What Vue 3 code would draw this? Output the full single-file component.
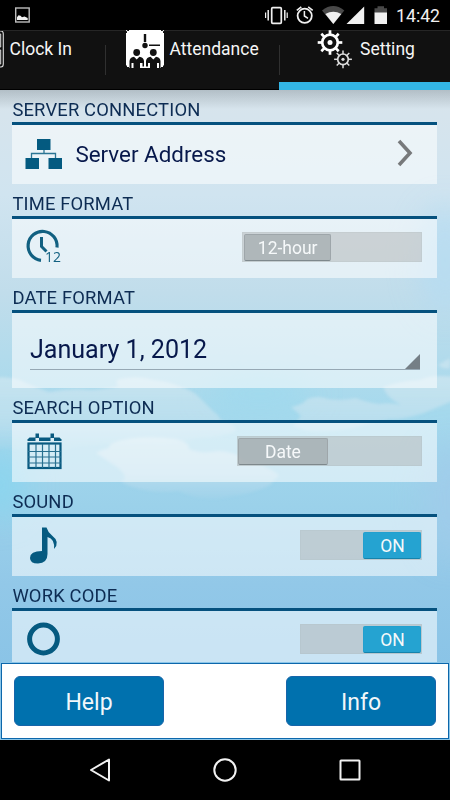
<script setup>
import { ref } from 'vue'

const sections = ref([
  { id: 'server', title: 'SERVER CONNECTION' },
  { id: 'time', title: 'TIME FORMAT', toggle: '12-hour' },
  { id: 'date', title: 'DATE FORMAT' },
  { id: 'search', title: 'SEARCH OPTION', toggle: 'Date' },
  { id: 'sound', title: 'SOUND', toggle: 'ON', on: true },
  { id: 'work', title: 'WORK CODE', toggle: 'ON', on: true },
])
const gearAngles = [0, 45, 90, 135, 180, 225, 270, 315]
</script>

<template>
  <div class="screen">
    <header class="status">
      <svg class="picture" width="16" height="16" viewBox="0 0 16 16">
        <rect x=".7" y="1" width="13.5" height="14" fill="none" stroke="#bdbdbd" stroke-width="1.4" />
        <path d="M2 13V10.3L3.500 8.300L5.500 8.800L7 10.300L9.500 9.500L12.700 11V13Z" fill="#f2f2f2" />
      </svg>
      <svg class="sysicons" width="130" height="30" viewBox="260 0 130 30">
        <g fill="none" stroke="#f0f0f0">
          <rect x="271.7" y="7.7" width="9.6" height="15.6" rx="1" stroke-width="1.7" />
          <path d="M268.2 10V20.500M284.800 10V20.500" stroke-width="1.500" />
          <path d="M265.600 12.500V18M287.200 12.500V18" stroke-width="1.200" />
          <circle cx="304.700" cy="15.800" r="7.100" stroke-width="1.800" />
          <path d="M304.400 11V16L308 18.300" stroke-width="1.500" />
          <path d="M296.800 10.300L301.300 6.800M308.200 6.800L312.700 10.300" stroke-width="1.600" />
        </g>
        <path d="M322 10.500Q333.300 1.700 344.300 10.500L333.300 24Z" fill="#494949" />
        <path d="M325.300 14Q333.300 9.500 341.300 14L333.300 24Z" fill="#f0f0f0" />
        <path d="M346.500 24H364.200V6.500Z" fill="#f0f0f0" />
        <path d="M374.500 8.200H377.500V6.200H384V8.200H387V13H374.500Z" fill="#494949" />
        <rect x="374.500" y="12.500" width="12.500" height="11.500" fill="#f0f0f0" />
      </svg>
      <span class="clock">14:42</span>
    </header>

    <nav class="tabs">
      <div class="tab tab-clock">
        <svg width="5" height="40" viewBox="0 0 5 40" fill="none" stroke="#ddd">
          <path d="M-2 0H1Q3.300 0 3.300 3V33Q3.300 36 1 36H-2" stroke-width="1.100" />
          <path d="M-2 3H.7V16H-2M-2 19H.7V33H-2" stroke-width="1" />
        </svg>
        <span>Clock In</span>
      </div>
      <div class="tab tab-attendance">
        <svg width="38" height="38" viewBox="0 0 38 38">
          <rect width="38" height="38" fill="#fff" />
          <g fill="#111">
            <path d="M0 1.500L1.500 0H3V1H1V3H0ZM38 1.500L36.500 0H35V1H37V3H38ZM0 35.500H1V37H3V38H0ZM38 35.500H37V37H35V38H38Z" />
            <circle cx="19" cy="15.500" r="2.700" />
            <path d="M17.800 4H20.200V12H17.800ZM23 14.500H34V16H23Z" />
            <circle cx="10.700" cy="22.500" r="3.400" />
            <circle cx="27.300" cy="22.500" r="3.400" />
            <path d="M3.500 38V31Q4 27.300 8 26.800L10.700 29.500L13.400 26.800Q17.500 27.300 18 31V38ZM20 38V31Q20.500 27.300 24.600 26.800L27.300 29.500L30 26.800Q34 27.300 34.500 31V38Z" />
          </g>
          <path d="M5.500 38V33H7.500V38ZM14 38V33H16.500V36.500H22V33H24V38ZM31 38V33H33V38Z" fill="#fff" />
        </svg>
        <span>Attendance</span>
      </div>
      <div class="tab tab-setting">
        <svg width="37" height="39" viewBox="0 0 37 39" fill="none" stroke="#fff">
          <g transform="translate(13 12.500)">
            <circle r="7.800" stroke-width="2.700" />
            <circle r="2.500" fill="#fff" stroke="none" />
            <path v-for="a in gearAngles" :key="a" d="M0 -8V-12.300" stroke-width="2.700" :transform="`rotate(${a})`" />
          </g>
          <g transform="translate(26 29.300)" stroke="#ddd">
            <circle r="5.300" stroke-width="1.700" />
            <circle r="1.600" fill="#ddd" stroke="none" />
            <path v-for="a in gearAngles" :key="a" d="M0 -5V-8.900" stroke-width="1.500" :transform="`rotate(${a})`" />
          </g>
        </svg>
        <span>Setting</span>
      </div>
    </nav>

    <main class="content">
      <svg class="sky" width="450" height="650" viewBox="0 90 450 650">
        <defs>
          <linearGradient id="air" x1="0" y1="0" x2="0" y2="1">
            <stop offset="0" stop-color="#d8e4ec" />
            <stop offset=".16" stop-color="#d0e4f0" />
            <stop offset=".31" stop-color="#c1ddeb" />
            <stop offset=".41" stop-color="#b2dbec" />
            <stop offset=".5" stop-color="#a5d9ed" />
            <stop offset=".64" stop-color="#9bd1ea" />
            <stop offset=".76" stop-color="#92c8e8" />
            <stop offset="1" stop-color="#83c0e5" />
          </linearGradient>
          <linearGradient id="shade" x1="0" y1="0" x2="0" y2="1">
            <stop offset="0" stop-color="#75828a" stop-opacity=".38" />
            <stop offset="1" stop-color="#75828a" stop-opacity="0" />
          </linearGradient>
          <linearGradient id="cloud" gradientUnits="userSpaceOnUse" x1="0" y1="375" x2="0" y2="452">
            <stop offset="0" stop-color="#d4e8f1" />
            <stop offset=".6" stop-color="#c8e3ef" stop-opacity=".9" />
            <stop offset="1" stop-color="#c0dfee" stop-opacity=".1" />
          </linearGradient>
          <linearGradient id="cloud-low" gradientUnits="userSpaceOnUse" x1="0" y1="438" x2="0" y2="505">
            <stop offset="0" stop-color="#d4e8f1" />
            <stop offset=".55" stop-color="#c4e0ee" />
            <stop offset="1" stop-color="#aed6ec" stop-opacity=".1" />
          </linearGradient>
          <filter id="soft" x="-20%" y="-20%" width="140%" height="140%"><feGaussianBlur stdDeviation="1.5" /></filter>
          <filter id="haze" x="-50%" y="-50%" width="200%" height="200%"><feGaussianBlur stdDeviation="14" /></filter>
        </defs>
        <rect y="90" width="450" height="650" fill="url(#air)" />
        <g filter="url(#haze)">
          <ellipse cx="445" cy="260" rx="28" ry="55" fill="#b4dcf2" opacity=".7" />
          <ellipse cx="260" cy="394" rx="55" ry="14" fill="#9adaee" opacity=".7" />
          <ellipse cx="0" cy="485" rx="28" ry="35" fill="#86d6f0" opacity=".7" />
          <ellipse cx="450" cy="500" rx="28" ry="60" fill="#a0cbe9" opacity=".7" />
        </g>
        <g filter="url(#soft)">
          <path fill="url(#cloud)" d="M-5 378Q5 376 20 380Q32 386 49 392Q70 388 90 390Q107 389 119 386Q111 379 127 378Q140 376 154 380Q166 381 176 385Q192 390 199 397Q207 405 213 411Q221 417 220 420Q236 424 236 431Q223 438 198 438Q170 445 150 442Q95 444 75 447Q60 455 34 451L-5 448Z" opacity=".65" />
          <path fill="url(#cloud-low)" d="M96 453Q102 449 109 448Q108 443 123 440Q145 435 175 439Q190 442 189 449Q200 454 218 451Q238 452 243 460Q265 464 279 475L270 485Q255 493 228 497Q203 502 178 491Q145 495 121 482Q132 476 111 463Z" opacity=".65" />
          <path fill="url(#cloud)" d="M291 407Q303 405 307 399Q318 395 328 399Q342 401 356 398Q366 402 379 404Q389 402 401 405Q386 397 383 387Q400 381 420 380Q432 374 455 377V400Q438 407 424 413Q402 420 390 419L363 425Q342 433 307 431L293 426L301 416Z" opacity=".65" />
          <path d="M438 365L450 358V368Q444 370 438 365Z" fill="#d0e6f1" opacity=".65" />
        </g>
        <rect y="90" width="450" height="19" fill="url(#shade)" />
      </svg>

      <section v-for="s in sections" :key="s.id" class="section" :class="s.id">
        <h2>{{ s.title }}</h2>
        <div class="card">
          <template v-if="s.id === 'server'">
            <svg class="icon-net" width="38" height="32" viewBox="0 0 38 32">
              <path d="M19 12V15.500M6.500 20V15.500H30.500V20" fill="none" stroke="#2b7594" stroke-width="1.300" />
              <path d="M12 1H25.500V12H12ZM.5 20H14V31H.5ZM23.500 20H37V31H23.500Z" fill="#045a80" />
            </svg>
            <span class="row-label">Server Address</span>
            <svg class="chevron" width="16" height="28" viewBox="0 0 16 28"><path d="M2 2L13 14L2 26" fill="none" stroke="#77797b" stroke-width="3.600" /></svg>
          </template>

          <div v-else-if="s.id === 'date'" class="spinner">
            <span>January 1, 2012</span>
            <svg width="15" height="15" viewBox="0 0 15 15"><path d="M0 15L15 0V15Z" fill="#757f86" /></svg>
          </div>

          <template v-else>
            <svg class="icon" width="40" height="40" viewBox="0 0 40 40">
              <template v-if="s.id === 'time'">
                <path d="M32 19.500A14.500 14.500 0 1 0 16 32.300" fill="none" stroke="#116081" stroke-width="3.200" />
                <path d="M16.500 9V18.500L21.500 23.500" fill="none" stroke="#116081" stroke-width="3" />
                <text x="20" y="34" class="icon-text">12</text>
              </template>
              <template v-else-if="s.id === 'search'">
                <path d="M10.500 1.500H14V6H10.500ZM25.500 1.500H29V6H25.500Z" fill="#085a80" />
                <path d="M2.500 9V7.500L4.500 5.500H34.500L36.500 7.500V9Z" fill="#085a80" />
                <path d="M10.500 6H14V9.500H10.500ZM25.500 6H29V9.500H25.500Z" fill="#dceef5" />
                <rect x="3.500" y="11.500" width="32" height="24.500" fill="none" stroke="#085a80" stroke-width="2.200" />
                <path d="M11 12V36M17.500 12V36M24 12V36M30.500 12V36M3 19.500H36M3 25H36M3 31H36" stroke="#276f8f" stroke-width="1.200" />
              </template>
              <template v-else-if="s.id === 'sound'">
                <path d="M17 1.500H21.500Q23 6.500 27 9.500Q35.500 16 29 23Q30 13 22.500 11V28Q22.500 37 13 37.500Q5 37.500 5 32Q5 25 17 25Z" fill="#055a80" />
              </template>
              <circle v-else cx="18.500" cy="19" r="13.900" fill="none" stroke="#055a80" stroke-width="5" />
            </svg>
            <div class="switch" :class="{ on: s.on }"><span class="thumb">{{ s.toggle }}</span></div>
          </template>
        </div>
      </section>
    </main>

    <footer class="actions">
      <div class="panel">
        <button>Help</button>
        <button>Info</button>
      </div>
    </footer>

    <div class="navbar">
      <svg width="26" height="26" viewBox="0 0 26 26"><path d="M4 13L22 2.500V23.500Z" /></svg>
      <svg width="26" height="26" viewBox="0 0 26 26"><circle cx="13" cy="13" r="10.700" /></svg>
      <svg width="26" height="26" viewBox="0 0 26 26"><rect x="3.500" y="3.500" width="19" height="19" rx=".5" /></svg>
    </div>
  </div>
</template>

<style>
body { margin: 0; background: #000; }
</style>

<style scoped>
.screen { width: 450px; height: 800px; overflow: hidden; display: flex; flex-direction: column; background: #000; font-family: Roboto, "Liberation Sans", sans-serif; }
svg { display: block; flex: none; }
.status { height: 30px; flex: none; display: flex; align-items: center; }
.picture { margin-left: 15px; }
.sysicons { margin-left: 229px; }
.clock { color: #f0f0f0; font-size: 17.700px; margin-left: 6px; line-height: 30px; padding-top: 1px; }
.tabs { height: 60px; box-sizing: border-box; flex: none; display: flex; background: #111; border-top: 1px solid #262626; }
.tab { display: flex; color: #f6f6f6; font-size: 17.500px; line-height: 37px; box-sizing: border-box; border-bottom: 1px solid #000; background: linear-gradient(#303030, #303030) right 14px / 1px 30px no-repeat; }
.tab-clock { width: 106px; }
.tab-clock span { margin-left: 4.500px; }
.tab-attendance { width: 173px; padding-left: 20px; background-image: none; }
.tab-attendance svg { margin-top: -1px; }
.tab-attendance span { margin-left: 5.500px; }
.tab-setting { width: 171px; padding-left: 38px; border-bottom: 8px solid #33b5e5; background: linear-gradient(#303030, #303030) left 14px / 1px 30px no-repeat; }
.tab-setting span { margin-left: 6px; }
.tab-setting svg { margin-top: -1px; }
.content { position: relative; height: 572px; flex: none; overflow: hidden; }
.sky { position: absolute; left: 0; top: 0; }
.section { position: relative; padding: 0 12.600px 0 12.400px; height: 94px; display: flex; flex-direction: column; }
.section.date { height: 110px; }
h2 { margin: 0; height: 31.500px; box-sizing: border-box; padding-top: 7px; font-size: 18.400px; letter-spacing: .16px; line-height: 26px; font-weight: 400; color: #0d2c53; flex: none; }
.card { flex: 1; display: flex; align-items: center; border-top: 3px solid #05517e; background: rgba(255, 255, 255, .54); background-clip: padding-box; }
.icon-net { margin-left: 12.600px; }
.row-label { flex: 1; margin-left: 12.400px; font-size: 22.400px; color: #07184b; }
.chevron { margin-right: 24px; position: relative; top: -1px; }
.icon { margin-left: 12.500px; }
.icon-text { font-family: "Open Sans", sans-serif; font-size: 14px; fill: #116081; }
.switch { margin-left: auto; margin-right: 15px; box-sizing: border-box; height: 30px; width: 180.500px; padding: 2px 1px 2px 1px; position: relative; top: -1px; display: flex; background: rgba(166, 169, 169, .43); border: 1px solid rgba(160, 170, 175, .12); }
.search .switch { width: 185.500px; }
.thumb { box-sizing: border-box; width: 87.500px; height: 27px; margin-top: -1px; line-height: 26px; font-size: 17.500px; text-align: center; color: #f6f9fa; background: rgba(155, 163, 167, .58); border: 1px solid #9ea6aa; border-bottom-color: #7e888c; border-radius: 2px; }
.search .thumb { width: 90px; margin-left: -1px; }
.switch.on { width: 122.500px; justify-content: flex-end; padding-right: 0; }
.on .thumb { width: 58px; background: #25a3d1; border-color: #22a0cf; border-bottom-color: #1583ac; }
.spinner { position: relative; flex: 1; margin: 0 17px 0 17.500px; height: 39px; border-bottom: 1px solid #96a8b4; display: flex; align-items: flex-end; justify-content: space-between; font-size: 25.100px; line-height: 39px; color: #07184b; }
.actions { height: 78px; flex: none; box-sizing: border-box; padding: 1px; background: #8bc6e9; }
.panel { height: 76px; box-sizing: border-box; border: 1px solid #0c67ab; background: #fff; padding: 12px 12px 11px; display: flex; justify-content: space-between; }
button { width: 150px; height: 50px; border: 1px solid #1765aa; border-radius: 6px; background: #0071ae; color: #f2f7fa; padding: 2px 0 0; font: 400 23px/48px Roboto, sans-serif; }
.navbar { height: 60px; display: flex; justify-content: center; align-items: center; gap: 99px; }
.navbar svg { fill: none; stroke: #f2f2f2; stroke-width: 2; stroke-linejoin: round; }
</style>
